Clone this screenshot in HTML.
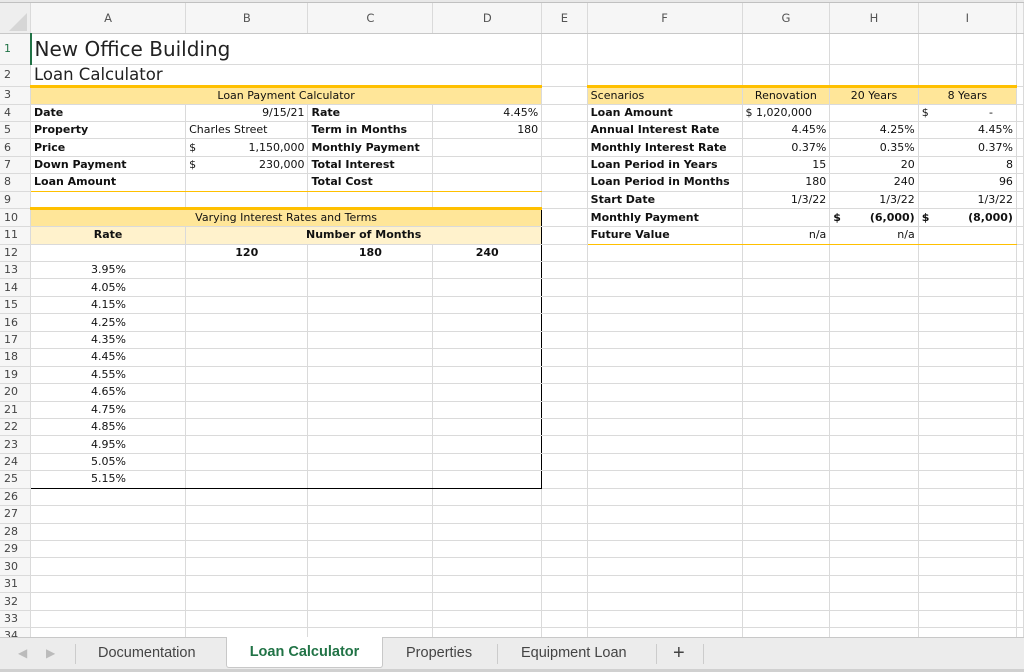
<!DOCTYPE html>
<html><head><meta charset="utf-8"><style>
*{margin:0;padding:0;box-sizing:border-box}
body{width:1024px;height:672px;overflow:hidden;background:#fff;font-family:"DejaVu Sans","Liberation Sans",sans-serif;position:relative}
table{border-collapse:collapse;table-layout:fixed;position:absolute;left:0;top:3px}
td{border-right:1px solid #dadada;border-bottom:1px solid #dadada;height:17.45px;font-size:11px;color:#111;white-space:nowrap;overflow:hidden;padding:0 3px;line-height:16px}
tr.h td{height:30px;background:#f6f6f6;color:#555;text-align:center;font-size:11.5px;border-bottom:1px solid #c8c8c8}
td.rh{background:#f6f6f6;color:#444;text-align:left;padding-left:4px;font-size:11px}
.b{font-weight:bold}.r{text-align:right}.c{text-align:center}
.y{background:#ffe699}.ly{background:#fff2cc}
.tt{border-top:3px solid #ffc000}
.bb{border-bottom:1px solid #ffc000}
.rb{border-right:1px solid #000}
.kb{border-bottom:1px solid #000}
.pl{border-left:1px solid #b89a9a}
#tabs{position:absolute;left:0;top:637px;width:1024px;height:35px;background:#ececec;border-top:1px solid #c8c8c8;border-bottom:3px solid #d0d0d0;font-family:"Liberation Sans",sans-serif;font-size:14.5px;color:#444}
#tabs div{position:absolute;top:0;height:30px;line-height:30px}
.sep{width:1px;background:#ccc;top:6px!important;height:20px!important}
</style></head><body>
<div style="position:absolute;left:0;top:0;width:1024px;height:3px;background:#e8e8e8;border-bottom:1px solid #c0c0c0"></div>
<table>
<colgroup><col style="width:28px"><col style="width:156px"><col style="width:123px"><col style="width:125px"><col style="width:110px"><col style="width:46px"><col style="width:155px"><col style="width:88px"><col style="width:89px"><col style="width:99px"><col style="width:5px"></colgroup>
<tr class="h"><td style="background:#eee"><div style="width:0;height:0;border-left:18px solid transparent;border-bottom:18px solid #d6d6d6;margin:8px 0 0 6px"></div></td><td>A</td><td>B</td><td>C</td><td>D</td><td>E</td><td>F</td><td>G</td><td>H</td><td>I</td><td></td></tr>
<tr><td class="rh" style="height:31px;color:#217346">1</td><td colspan="4" style="font-size:20px;border-left:2px solid #217346;color:#222;border-right:1px solid #dadada">New Office Building</td><td></td><td></td><td></td><td></td><td></td><td></td></tr>
<tr><td class="rh" style="height:22px">2</td><td colspan="4" style="font-size:16.5px;color:#222">Loan Calculator</td><td></td><td></td><td></td><td></td><td></td><td></td></tr>
<tr><td class="rh">3</td><td colspan="4" class="y tt c">Loan Payment Calculator</td><td></td><td class="y tt">Scenarios</td><td class="y tt c">Renovation</td><td class="y tt c">20 Years</td><td class="y tt c">8 Years</td><td></td></tr>
<tr><td class="rh">4</td><td class="b">Date</td><td class="r">9/15/21</td><td class="b">Rate</td><td class="r">4.45%</td><td></td><td class="b">Loan Amount</td><td>$ 1,020,000</td><td></td><td>$<span style="float:right;margin-right:20px">-</span></td><td></td></tr>
<tr><td class="rh">5</td><td class="b">Property</td><td>Charles Street</td><td class="b">Term in Months</td><td class="r">180</td><td></td><td class="b">Annual Interest Rate</td><td class="r">4.45%</td><td class="r">4.25%</td><td class="r">4.45%</td><td></td></tr>
<tr><td class="rh">6</td><td class="b">Price</td><td>$<span style="float:right">1,150,000</span></td><td class="b">Monthly Payment</td><td></td><td></td><td class="b">Monthly Interest Rate</td><td class="r">0.37%</td><td class="r">0.35%</td><td class="r">0.37%</td><td></td></tr>
<tr><td class="rh">7</td><td class="b">Down Payment</td><td>$<span style="float:right">230,000</span></td><td class="b">Total Interest</td><td></td><td></td><td class="b">Loan Period in Years</td><td class="r">15</td><td class="r">20</td><td class="r">8</td><td></td></tr>
<tr><td class="rh">8</td><td class="b bb">Loan Amount</td><td class="bb"></td><td class="b bb">Total Cost</td><td class="bb"></td><td></td><td class="b">Loan Period in Months</td><td class="r">180</td><td class="r">240</td><td class="r">96</td><td></td></tr>
<tr><td class="rh">9</td><td></td><td></td><td></td><td></td><td></td><td class="b">Start Date</td><td class="r">1/3/22</td><td class="r">1/3/22</td><td class="r">1/3/22</td><td></td></tr>
<tr><td class="rh">10</td><td colspan="4" class="y tt c rb">Varying Interest Rates and Terms</td><td></td><td class="b">Monthly Payment</td><td></td><td class="b">$<span style="float:right">(6,000)</span></td><td class="b">$<span style="float:right">(8,000)</span></td><td></td></tr>
<tr><td class="rh">11</td><td class="ly b c">Rate</td><td colspan="3" class="ly b c rb pl">Number of Months</td><td></td><td class="b bb">Future Value</td><td class="r bb">n/a</td><td class="r bb">n/a</td><td class="bb"></td><td></td></tr>
<tr><td class="rh">12</td><td></td><td class="b c pl">120</td><td class="b c">180</td><td class="b c rb">240</td><td></td><td></td><td></td><td></td><td></td><td></td></tr>
<tr><td class="rh">13</td><td style="padding-left:60px">3.95%</td><td class="pl"></td><td></td><td class="rb"></td><td></td><td></td><td></td><td></td><td></td><td></td></tr>
<tr><td class="rh">14</td><td style="padding-left:60px">4.05%</td><td class="pl"></td><td></td><td class="rb"></td><td></td><td></td><td></td><td></td><td></td><td></td></tr>
<tr><td class="rh">15</td><td style="padding-left:60px">4.15%</td><td class="pl"></td><td></td><td class="rb"></td><td></td><td></td><td></td><td></td><td></td><td></td></tr>
<tr><td class="rh">16</td><td style="padding-left:60px">4.25%</td><td class="pl"></td><td></td><td class="rb"></td><td></td><td></td><td></td><td></td><td></td><td></td></tr>
<tr><td class="rh">17</td><td style="padding-left:60px">4.35%</td><td class="pl"></td><td></td><td class="rb"></td><td></td><td></td><td></td><td></td><td></td><td></td></tr>
<tr><td class="rh">18</td><td style="padding-left:60px">4.45%</td><td class="pl"></td><td></td><td class="rb"></td><td></td><td></td><td></td><td></td><td></td><td></td></tr>
<tr><td class="rh">19</td><td style="padding-left:60px">4.55%</td><td class="pl"></td><td></td><td class="rb"></td><td></td><td></td><td></td><td></td><td></td><td></td></tr>
<tr><td class="rh">20</td><td style="padding-left:60px">4.65%</td><td class="pl"></td><td></td><td class="rb"></td><td></td><td></td><td></td><td></td><td></td><td></td></tr>
<tr><td class="rh">21</td><td style="padding-left:60px">4.75%</td><td class="pl"></td><td></td><td class="rb"></td><td></td><td></td><td></td><td></td><td></td><td></td></tr>
<tr><td class="rh">22</td><td style="padding-left:60px">4.85%</td><td class="pl"></td><td></td><td class="rb"></td><td></td><td></td><td></td><td></td><td></td><td></td></tr>
<tr><td class="rh">23</td><td style="padding-left:60px">4.95%</td><td class="pl"></td><td></td><td class="rb"></td><td></td><td></td><td></td><td></td><td></td><td></td></tr>
<tr><td class="rh">24</td><td style="padding-left:60px">5.05%</td><td class="pl"></td><td></td><td class="rb"></td><td></td><td></td><td></td><td></td><td></td><td></td></tr>
<tr><td class="rh">25</td><td class="kb" style="padding-left:60px">5.15%</td><td class="kb pl"></td><td class="kb"></td><td class="rb kb"></td><td></td><td></td><td></td><td></td><td></td><td></td></tr>
<tr><td class="rh">26</td><td></td><td></td><td></td><td></td><td></td><td></td><td></td><td></td><td></td><td></td></tr>
<tr><td class="rh">27</td><td></td><td></td><td></td><td></td><td></td><td></td><td></td><td></td><td></td><td></td></tr>
<tr><td class="rh">28</td><td></td><td></td><td></td><td></td><td></td><td></td><td></td><td></td><td></td><td></td></tr>
<tr><td class="rh">29</td><td></td><td></td><td></td><td></td><td></td><td></td><td></td><td></td><td></td><td></td></tr>
<tr><td class="rh">30</td><td></td><td></td><td></td><td></td><td></td><td></td><td></td><td></td><td></td><td></td></tr>
<tr><td class="rh">31</td><td></td><td></td><td></td><td></td><td></td><td></td><td></td><td></td><td></td><td></td></tr>
<tr><td class="rh">32</td><td></td><td></td><td></td><td></td><td></td><td></td><td></td><td></td><td></td><td></td></tr>
<tr><td class="rh">33</td><td></td><td></td><td></td><td></td><td></td><td></td><td></td><td></td><td></td><td></td></tr>
<tr><td class="rh">34</td><td></td><td></td><td></td><td></td><td></td><td></td><td></td><td></td><td></td><td></td></tr>
</table>
<div id="tabs">
<div style="left:18px;color:#bbb;font-size:12px">◀</div>
<div style="left:46px;color:#bbb;font-size:12px">▶</div>
<div class="sep" style="left:75px"></div>
<div style="left:98px">Documentation</div>
<div style="left:226px;width:157px;background:#fff;height:31px;border:1px solid #c8c8c8;border-top:none;border-radius:0 0 3px 3px;text-align:center;color:#217346;font-weight:bold;top:-1px">Loan Calculator</div>
<div style="left:406px">Properties</div>
<div class="sep" style="left:497px"></div>
<div style="left:521px">Equipment Loan</div>
<div class="sep" style="left:656px"></div>
<div style="left:673px;font-size:20px;color:#444">+</div>
<div class="sep" style="left:703px"></div>
</div>
</body></html>
